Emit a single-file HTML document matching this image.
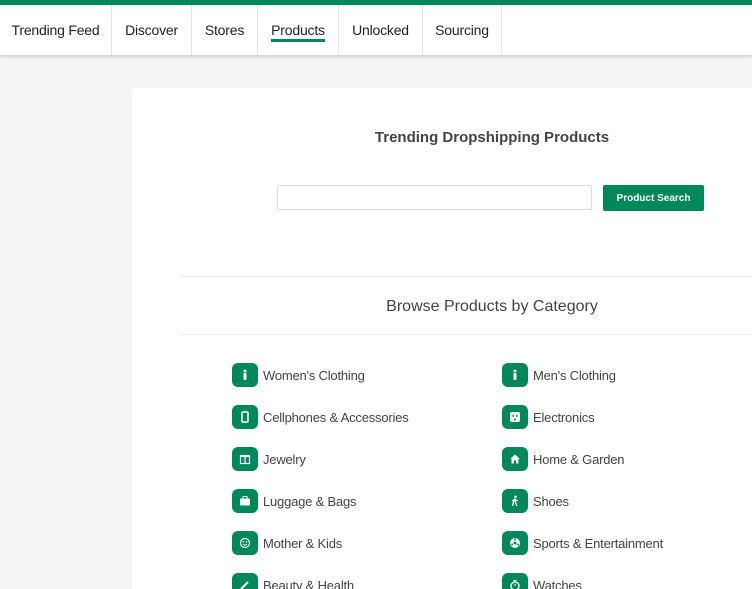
<!DOCTYPE html>
<html><head><meta charset="utf-8"><style>
*{margin:0;padding:0;box-sizing:border-box}
html,body{width:752px;height:589px;overflow:hidden}
body{background:#f5f5f5;font-family:"Liberation Sans",sans-serif;position:relative}
.top{position:absolute;left:0;top:0;width:752px;height:5px;background:#00875a}
.nav{position:absolute;left:0;top:5px;width:752px;height:50px;background:#fff;box-shadow:0 2px 3px rgba(0,0,0,.15);display:flex}
.nav div{height:50px;border-right:1px solid #e4e4e4;font-size:14px;color:#222;display:flex;align-items:center;justify-content:center;position:relative;letter-spacing:-0.2px}
.nav .act span{border-bottom:3px solid #00875a;padding-bottom:1px;margin-top:3px}
.card{position:absolute;left:132px;top:88px;width:640px;height:501px;background:#fff;border-radius:3px 0 0 0}
h1{position:absolute;left:0;top:129px;width:984px;text-align:center;font-size:15px;color:#444;font-weight:bold}
.inp{position:absolute;left:277px;top:185px;width:315px;height:25px;border:1px solid #ddd;border-radius:2px;background:#fff}
.btn{position:absolute;left:603px;top:185px;width:101px;height:26px;background:#00875a;border-radius:2px;color:#fff;font-size:10px;font-weight:bold;text-align:center;line-height:28px}
.ln{position:absolute;left:180px;width:572px;height:1px;background:#ececec}
h2{position:absolute;left:0;top:298px;width:984px;text-align:center;font-size:16px;color:#444;font-weight:normal}
.it{position:absolute;height:26px;display:flex;align-items:center;font-size:13px;color:#444;letter-spacing:-0.2px}
.ic{width:26px;height:24px;background:#00875a;border-radius:6px;margin-right:5px;display:flex;align-items:center;justify-content:center}
</style></head><body>
<div class="top"></div>
<div class="nav">
<div style="width:112px">Trending Feed</div>
<div style="width:80px">Discover</div>
<div style="width:66px">Stores</div>
<div style="width:81px" class="act"><span>Products</span></div>
<div style="width:84px">Unlocked</div>
<div style="width:79px">Sourcing</div>
</div>
<div class="card"></div>
<h1>Trending Dropshipping Products</h1>
<div class="inp"></div>
<div class="btn">Product Search</div>
<div class="ln" style="top:276px"></div>
<h2>Browse Products by Category</h2>
<div class="ln" style="top:334px"></div>

<div class="it" style="left:232px;top:362px"><div class="ic"><svg width="12" height="12" viewBox="0 0 12 12"><circle cx="6" cy="2" r="1.5" fill="#fff"/><rect x="4.5" y="4" width="3" height="7" rx="1" fill="#fff"/></svg></div>Women's Clothing</div>
<div class="it" style="left:502px;top:362px"><div class="ic"><svg width="12" height="12" viewBox="0 0 12 12"><circle cx="6" cy="2" r="1.5" fill="#fff"/><rect x="4.5" y="4" width="3" height="7" rx="1" fill="#fff"/></svg></div>Men's Clothing</div>

<div class="it" style="left:232px;top:404px"><div class="ic"><svg width="12" height="12" viewBox="0 0 12 12"><rect x="3" y="1" width="6" height="10" rx="1" fill="none" stroke="#fff" stroke-width="1.5"/></svg></div>Cellphones &amp; Accessories</div>
<div class="it" style="left:502px;top:404px"><div class="ic"><svg width="12" height="12" viewBox="0 0 12 12"><rect x="1" y="1" width="10" height="10" rx="2" fill="#fff"/><rect x="3.5" y="3.5" width="1.3" height="2.5" fill="#00875a"/><rect x="7.2" y="3.5" width="1.3" height="2.5" fill="#00875a"/><circle cx="6" cy="8.5" r="1" fill="#00875a"/></svg></div>Electronics</div>

<div class="it" style="left:232px;top:446px"><div class="ic"><svg width="12" height="12" viewBox="0 0 12 12"><rect x="1.5" y="3.5" width="9" height="7" fill="none" stroke="#fff" stroke-width="1.2"/><line x1="6" y1="3" x2="6" y2="11" stroke="#fff" stroke-width="1.2"/><rect x="1" y="2" width="10" height="2" fill="#fff"/></svg></div>Jewelry</div>
<div class="it" style="left:502px;top:446px"><div class="ic"><svg width="12" height="12" viewBox="0 0 12 12"><path d="M6 1.5L11 6H9.5V10.5H7V7.5H5V10.5H2.5V6H1Z" fill="#fff"/></svg></div>Home &amp; Garden</div>

<div class="it" style="left:232px;top:488px"><div class="ic"><svg width="12" height="12" viewBox="0 0 12 12"><rect x="1" y="3.5" width="10" height="7" rx="1" fill="#fff"/><rect x="4" y="1.5" width="4" height="2.5" fill="none" stroke="#fff" stroke-width="1"/></svg></div>Luggage &amp; Bags</div>
<div class="it" style="left:502px;top:488px"><div class="ic"><svg width="12" height="12" viewBox="0 0 12 12"><circle cx="6.5" cy="1.8" r="1.3" fill="#fff"/><path d="M6 3.5L4.5 7L3.5 11M6 3.5L6.5 7.5L8 11M5.5 4.5L3 6M6.5 4.5L9 6" stroke="#fff" stroke-width="1.3" fill="none"/></svg></div>Shoes</div>

<div class="it" style="left:232px;top:530px"><div class="ic"><svg width="12" height="12" viewBox="0 0 12 12"><circle cx="6" cy="6" r="4.5" fill="none" stroke="#fff" stroke-width="1.2"/><circle cx="4.5" cy="5" r=".8" fill="#fff"/><circle cx="7.5" cy="5" r=".8" fill="#fff"/><path d="M4 7.3Q6 9 8 7.3" stroke="#fff" fill="none"/></svg></div>Mother &amp; Kids</div>
<div class="it" style="left:502px;top:530px"><div class="ic"><svg width="12" height="12" viewBox="0 0 12 12"><circle cx="6" cy="6" r="5" fill="#fff"/><circle cx="6" cy="6" r="1.5" fill="#00875a"/><circle cx="6" cy="2.5" r="1" fill="#00875a"/><circle cx="3" cy="7.5" r="1" fill="#00875a"/><circle cx="9" cy="7.5" r="1" fill="#00875a"/></svg></div>Sports &amp; Entertainment</div>

<div class="it" style="left:232px;top:572px"><div class="ic"><svg width="12" height="12" viewBox="0 0 12 12"><path d="M2 10L9 3" stroke="#fff" stroke-width="2"/></svg></div>Beauty &amp; Health</div>
<div class="it" style="left:502px;top:572px"><div class="ic"><svg width="12" height="12" viewBox="0 0 12 12"><circle cx="6" cy="7" r="4" fill="none" stroke="#fff" stroke-width="1.3"/><rect x="4.5" y="1" width="3" height="1.3" fill="#fff"/><line x1="6" y1="7" x2="6" y2="4.8" stroke="#fff"/></svg></div>Watches</div>
</body></html>
